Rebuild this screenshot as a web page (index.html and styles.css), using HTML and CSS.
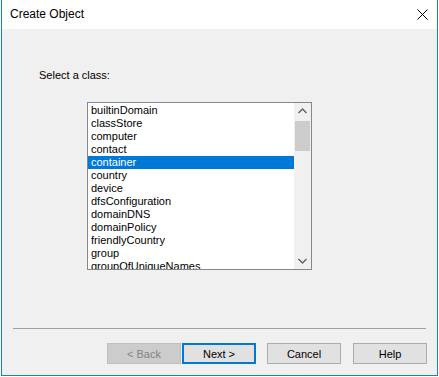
FILE: index.html
```html
<!DOCTYPE html>
<html lang="en">
<head>
    <meta charset="UTF-8">
    <meta name="viewport" content="width=device-width, initial-scale=1.0">
    <title>Create Object</title>
    <link rel="stylesheet" href="styles.css">
</head>
<body>
    <div class="window">
        <div class="titlebar">
            <span class="title">Create Object</span>
            <svg class="close" width="11" height="11" viewBox="0 0 11 11">
                <path d="M0.5 0.5 L10.5 10.5 M10.5 0.5 L0.5 10.5" stroke="#000" stroke-width="1" fill="none"/>
            </svg>
        </div>

        <div class="dialog">
            <div class="label">Select a class:</div>

            <div class="listbox">
                <ul class="items">
                    <li>builtinDomain</li>
                    <li>classStore</li>
                    <li>computer</li>
                    <li>contact</li>
                    <li class="selected">container</li>
                    <li>country</li>
                    <li>device</li>
                    <li>dfsConfiguration</li>
                    <li>domainDNS</li>
                    <li>domainPolicy</li>
                    <li>friendlyCountry</li>
                    <li>group</li>
                    <li>groupOfUniqueNames</li>
                </ul>
                <div class="scrollbar">
                    <svg class="arrow" width="17" height="17" viewBox="0 0 17 17">
                        <path d="M4.5 10 L8.5 6 L12.5 10" stroke="#606060" stroke-width="1.4" fill="none"/>
                    </svg>
                    <div class="track"><div class="thumb"></div></div>
                    <svg class="arrow" width="17" height="17" viewBox="0 0 17 17">
                        <path d="M4.5 7 L8.5 11 L12.5 7" stroke="#606060" stroke-width="1.4" fill="none"/>
                    </svg>
                </div>
            </div>

            <div class="separator"></div>

            <div class="buttons">
                <button class="btn" disabled>&lt; Back</button>
                <button class="btn default">Next &gt;</button>
                <button class="btn cancel">Cancel</button>
                <button class="btn help">Help</button>
            </div>
        </div>
    </div>
</body>
</html>
```

FILE: styles.css
```css
body {
    margin: 0;
    background: #ffffff;
    font-family: "Liberation Sans", Arial, sans-serif;
    font-size: 11px;
    color: #000;
}
.window {
    margin-left: 1px;
    width: 437px;
    height: 376px;
    box-sizing: border-box;
    border: 1px solid #1a7fd4;
    border-top: none;
    display: flex;
    flex-direction: column;
}
.titlebar {
    height: 29px;
    flex: none;
    background: #fff;
    display: flex;
    align-items: center;
    justify-content: space-between;
    padding: 0 9px 0 8px;
}
.title {
    font-size: 12px;
    margin-top: -1px;
}
.close { margin-top: -1px; }

.dialog {
    flex: 1;
    background: #f0f0f0;
    padding-top: 40px;
}
.label {
    padding-left: 37px;
    line-height: 13px;
}
.listbox {
    margin: 20px 0 0 85px;
    width: 225px;
    height: 168px;
    box-sizing: border-box;
    border: 1px solid #828790;
    background: #fff;
    display: flex;
    overflow: hidden;
}
.items {
    list-style: none;
    margin: 0;
    padding: 1px 0 0;
    flex: 1;
}
.items li {
    height: 13px;
    line-height: 13px;
    padding-left: 3px;
    white-space: nowrap;
}
.items li.selected {
    background: #0078d7;
    color: #fff;
}
.scrollbar {
    width: 17px;
    flex: none;
    background: #f0f0f0;
    display: flex;
    flex-direction: column;
}
.arrow { display: block; flex: none; }
.track {
    flex: 1;
    padding: 1px 1px 0;
}
.thumb {
    height: 30px;
    background: #cdcdcd;
}

.separator {
    margin: 58px 0 0 11px;
    width: 413px;
    height: 1px;
    background: #a0a0a0;
}
.buttons {
    display: flex;
    margin: 14px 0 0 105px;
}
.btn {
    width: 74px;
    height: 21px;
    box-sizing: border-box;
    border: 1px solid #adadad;
    background: #e1e1e1;
    font-family: "Liberation Sans", Arial, sans-serif;
    font-size: 11px;
    color: #000;
    padding: 0;
}
.btn:disabled {
    background: #cccccc;
    border-color: #bfbfbf;
    color: #838383;
}
.btn.default {
    margin-left: 1px;
    border: 2px solid #0078d7;
}
.btn.cancel { margin-left: 11px; }
.btn.help { margin-left: 12px; }
```
